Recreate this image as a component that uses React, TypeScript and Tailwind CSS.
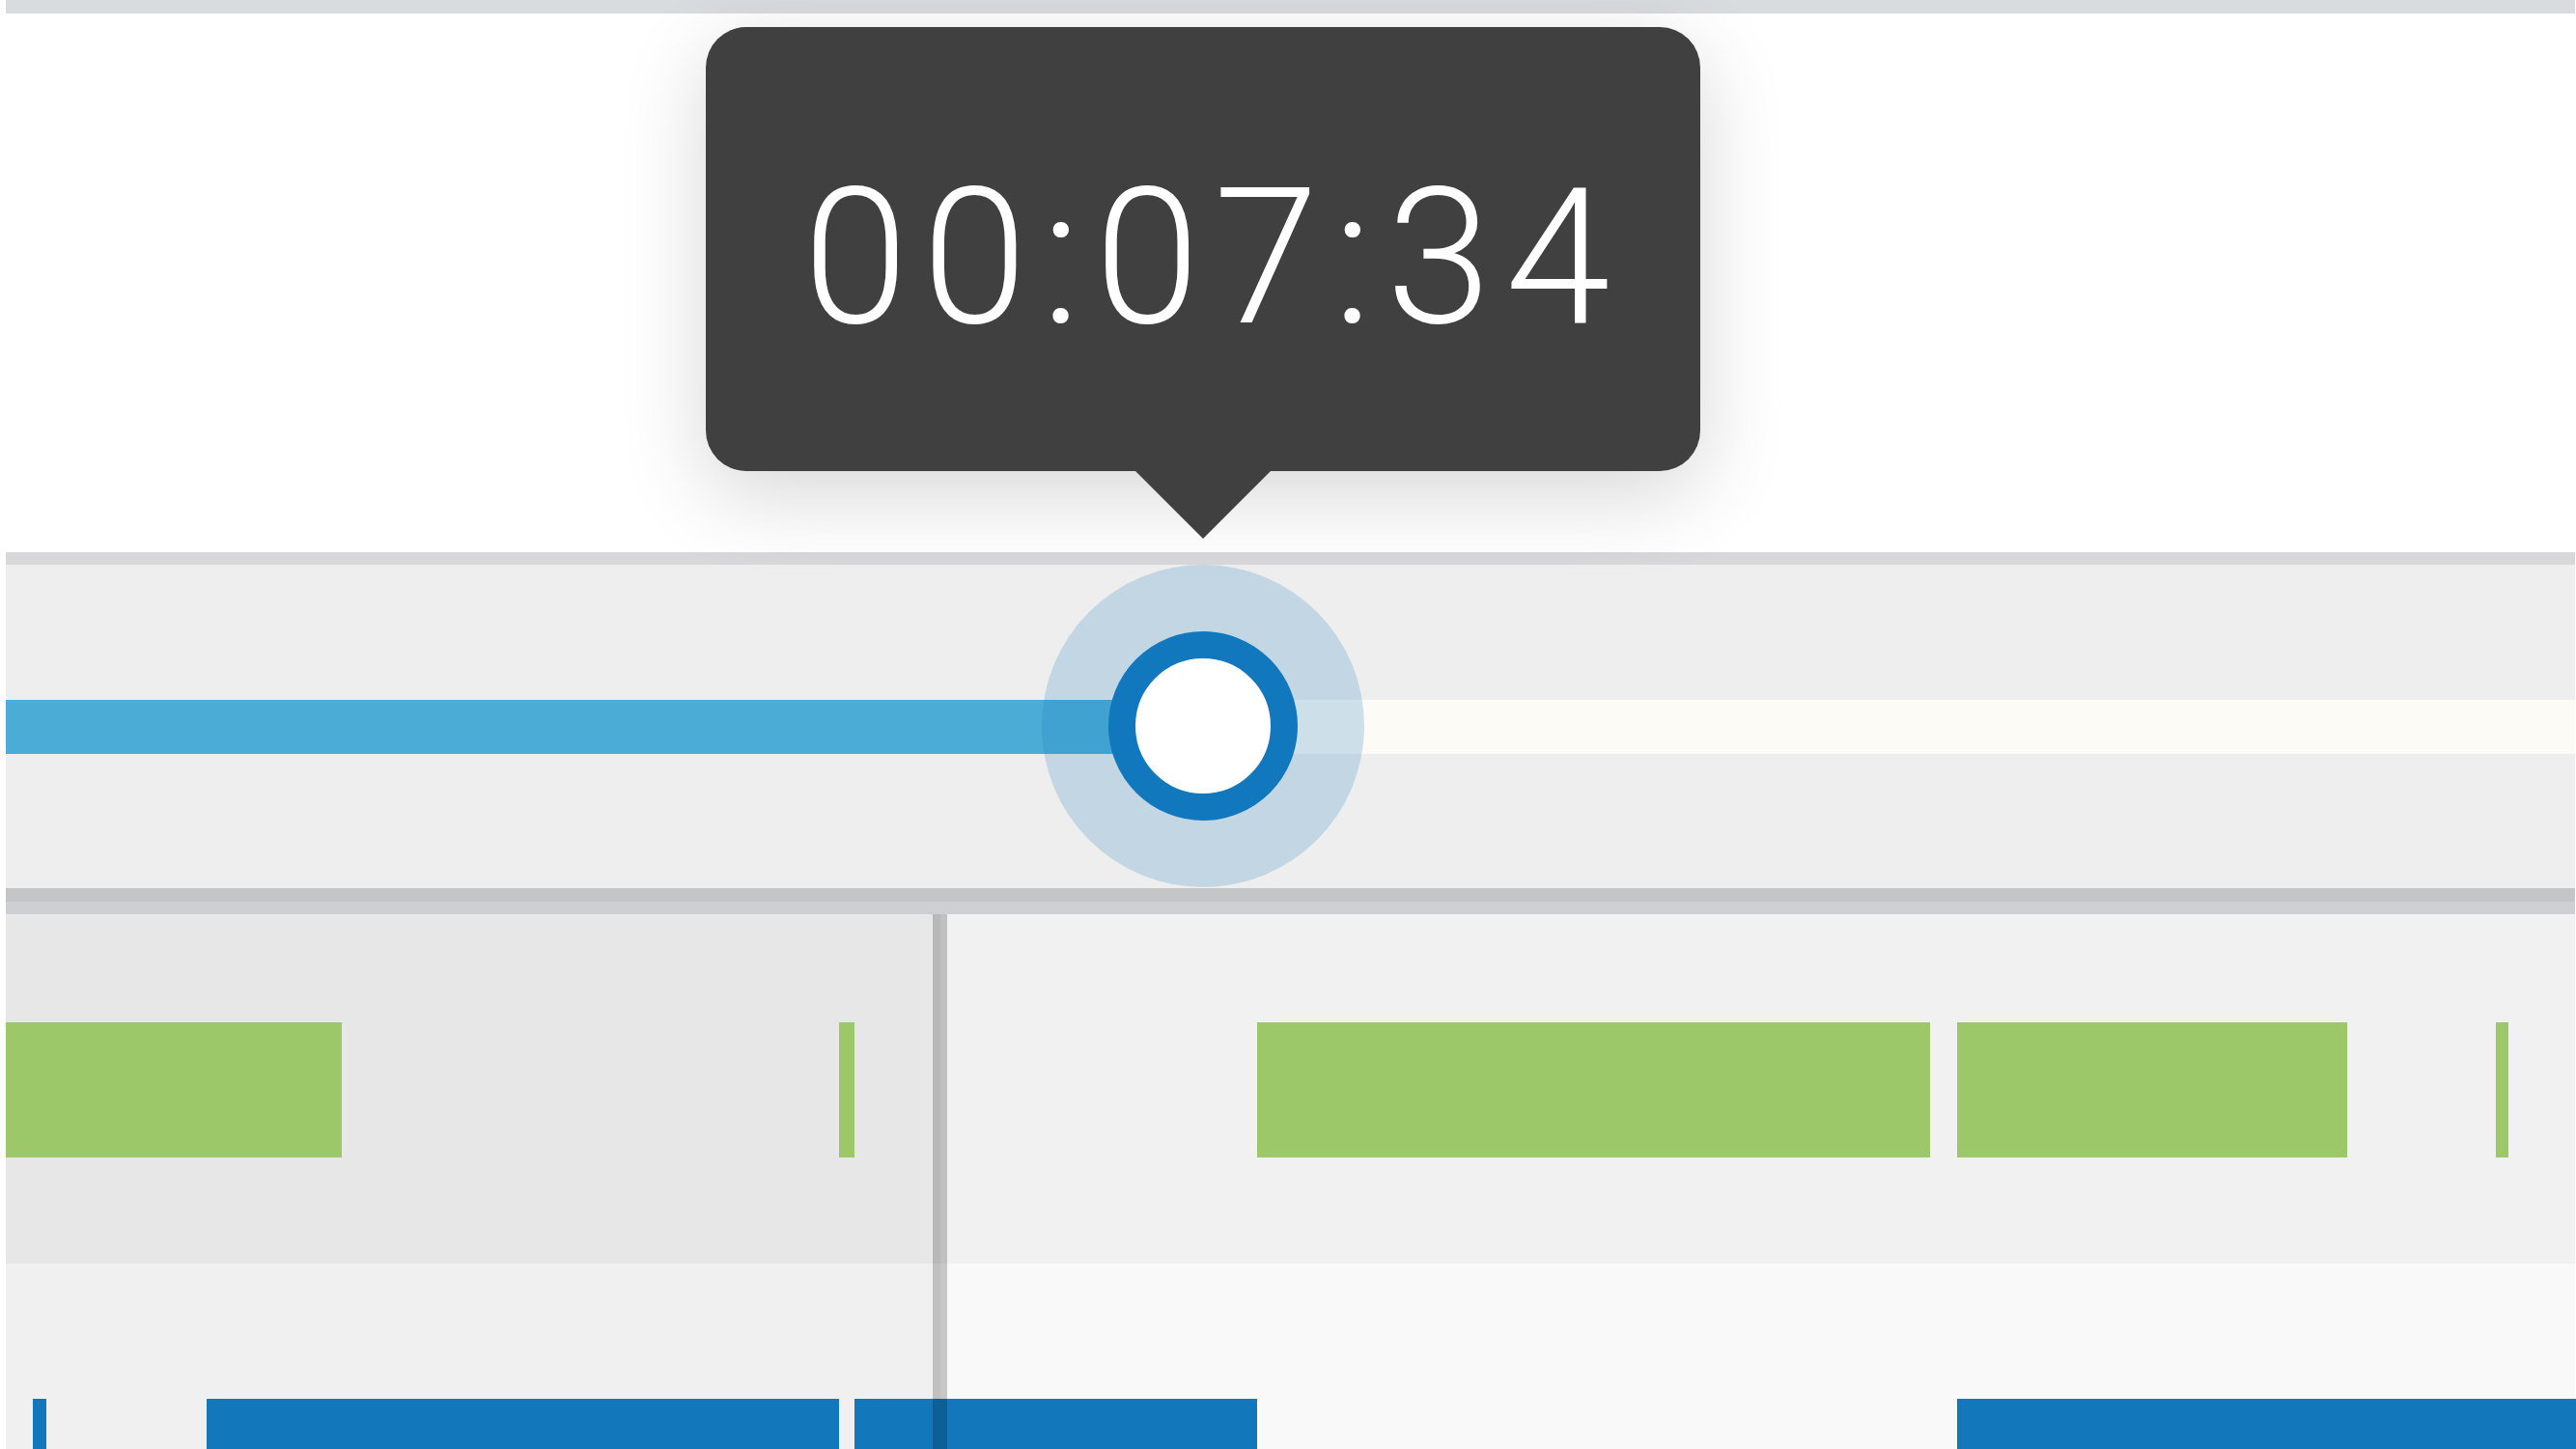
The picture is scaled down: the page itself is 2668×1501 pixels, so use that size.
const greenClips = [
  { left: 0, width: 348 },
  { left: 863, width: 16 },
  { left: 1296, width: 697 },
  { left: 2021, width: 404 },
  { left: 2579, width: 13 },
];

const blueClips = [
  { left: 28, width: 14 },
  { left: 208, width: 655 },
  { left: 879, width: 417 },
  { left: 2021, width: 645 },
];

// knob center, relative to the content column
const KNOB_X = 1240;

function Tooltip({ label }: { label: string }) {
  return (
    <div className="absolute left-[725px] top-[14px] z-20 flex flex-col items-center">
      <div className="w-[1030px] h-[460px] rounded-[42px] bg-[#404040] shadow-[0_24px_90px_rgba(0,0,0,0.16)] flex items-center justify-center">
        <span className="font-['Roboto','Liberation_Sans',sans-serif] font-light text-white text-[196px] leading-none tracking-[14.5px] pl-[22px] pt-[18px]">
          {label}
        </span>
      </div>
      <div className="w-0 h-0 border-l-[70px] border-r-[70px] border-t-[70px] border-l-transparent border-r-transparent border-t-[#404040]" />
    </div>
  );
}

function Scrubber() {
  return (
    <div className="relative h-[335px] bg-[#eeeeee]">
      <div className="absolute left-0 right-0 top-[140px] h-[56px] flex">
        <div className="bg-[#4badd6]" style={{ width: KNOB_X }} />
        <div className="flex-1 bg-[#fcfbf6]" />
      </div>
      <div
        className="absolute top-0 w-[334px] h-[334px] -ml-[167px] rounded-full bg-[rgba(18,120,189,0.2)] flex items-center justify-center"
        style={{ left: KNOB_X }}
      >
        <div className="w-[196px] h-[196px] rounded-full border-[28px] border-[#1278bd] bg-white" />
      </div>
    </div>
  );
}

function Track({ clips, color, top, height }: { clips: { left: number; width: number }[]; color: string; top: string; height: string }) {
  return (
    <>
      {clips.map((c, i) => (
        <div key={i} className={`absolute ${color} ${top} ${height}`} style={{ left: c.left, width: c.width }} />
      ))}
    </>
  );
}

export default function App() {
  return (
    <div className="w-[2668px] h-[1501px] bg-white pl-[6px] pr-[1px] flex flex-col overflow-hidden">
      <div className="h-[14px] bg-[#d9dcdf] shrink-0" />
      <div className="relative h-[558px] shrink-0">
        <Tooltip label="00:07:34" />
      </div>
      <div className="h-[13px] bg-[#d8d8da] shrink-0" />
      <Scrubber />
      <div className="h-[14px] bg-[#c4c5c7] shrink-0" />
      <div className="h-[13px] bg-[#cdcfd3] shrink-0" />
      <div className="relative flex-1 flex flex-col">
        <div className="relative h-[362px] flex">
          <div className="w-[968px] bg-[#e7e7e7]" />
          <div className="flex-1 bg-[#f1f1f1]" />
          <Track clips={greenClips} color="bg-[#9cc869]" top="top-[112px]" height="h-[140px]" />
        </div>
        <div className="relative flex-1 flex">
          <div className="w-[968px] bg-[#f0f0f0]" />
          <div className="flex-1 bg-[#f9f9f9]" />
          <Track clips={blueClips} color="bg-[#1277bb]" top="top-[140px]" height="h-[52px]" />
        </div>
        <div className="absolute top-0 bottom-0 left-[960px] w-[15px] bg-[rgba(0,0,0,0.2)]" />
      </div>
    </div>
  );
}
